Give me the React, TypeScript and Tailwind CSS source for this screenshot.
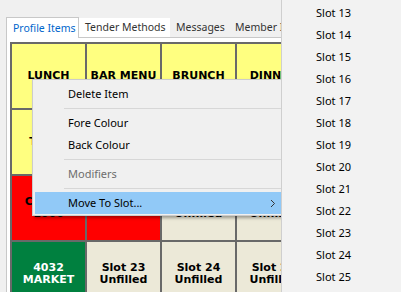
import React from "react";

type Cell = { lines: string[]; bg: string; fg?: string };

const rows: Cell[][] = [
  [
    { lines: ["LUNCH"], bg: "bg-[#ffff80]" },
    { lines: ["BAR MENU"], bg: "bg-[#ffff80]" },
    { lines: ["BRUNCH"], bg: "bg-[#ffff80]" },
    { lines: ["DINNER"], bg: "bg-[#ffff80]" },
  ],
  [
    { lines: ["TAPAS"], bg: "bg-[#ffff80]" },
    { lines: ["DRINKS"], bg: "bg-[#ffff80]" },
    { lines: ["DESSERT"], bg: "bg-[#ffff80]" },
    { lines: ["KIDS"], bg: "bg-[#ffff80]" },
  ],
  [
    { lines: ["COFFEE", "1000"], bg: "bg-[#ff0000]" },
    { lines: ["WINE"], bg: "bg-[#ff0000]" },
    { lines: ["Slot 19", "Unfilled"], bg: "bg-[#ece9d8]" },
    { lines: ["Slot 20", "Unfilled"], bg: "bg-[#ece9d8]" },
  ],
  [
    { lines: ["4032", "MARKET"], bg: "bg-[#00803f]", fg: "text-white" },
    { lines: ["Slot 23", "Unfilled"], bg: "bg-[#ece9d8]" },
    { lines: ["Slot 24", "Unfilled"], bg: "bg-[#ece9d8]" },
    { lines: ["Slot 25", "Unfilled"], bg: "bg-[#ece9d8]" },
  ],
];

const slots = [13, 14, 15, 16, 17, 18, 19, 20, 21, 22, 23, 24, 25];

function Sep() {
  return (
    <div className="h-[7px] flex items-center pl-[29px]">
      <div className="h-px w-full bg-[#d7d7d7]" />
    </div>
  );
}

function Item({ label, disabled }: { label: string; disabled?: boolean }) {
  return (
    <div
      className={`h-[22px] flex items-center pl-[33px] pr-[8px] ${disabled ? "text-[#6d6d6d]" : "text-black"}`}
    >
      <span className="flex-1">{label}</span>
    </div>
  );
}

export default function App() {
  return (
    <div
      className="relative w-[401px] h-[292px] overflow-hidden bg-[#f0f0f0]"
      style={{ fontFamily: '"Noto Sans", sans-serif' }}
    >
      {/* main window */}
      <div className="w-[281px] h-full overflow-hidden flex flex-col pt-[17px] pl-[6px]">
        {/* tabs */}
        <div className="flex h-[20px] text-[10.5px] leading-none relative z-10 items-end whitespace-nowrap">
          <div className="w-[73px] shrink-0 h-[21px] bg-white border border-b-0 border-[#c8c8c8] pl-[6px] flex items-center text-[#0066cc] -mb-px">
            Profile Items
          </div>
          <div className="w-[91px] shrink-0 h-[19px] bg-white pl-[6px] flex items-center text-[#333]">
            Tender Methods
          </div>
          <div className="w-[60px] shrink-0 h-[19px] pl-[6px] flex items-center text-[#333]">
            Messages
          </div>
          <div className="w-[60px] shrink-0 h-[19px] pl-[5px] flex items-center text-[#333]">
            Member Info
          </div>
        </div>
        {/* panel */}
        <div className="flex-1 bg-white border-l border-t border-[#c8c8c8] pt-[4px] pl-[3px]">
          <div
            className="grid grid-cols-[repeat(4,73px)] auto-rows-[64px] gap-[2px] p-[2px] bg-[#696969] w-max"
            style={{ fontFamily: '"DejaVu Sans", sans-serif' }}
          >
            {rows.flat().map((c, i) => (
              <div
                key={i}
                className={`${c.bg} ${c.fg ?? "text-black"} flex flex-col items-center justify-center text-[11px] font-bold leading-[12px] whitespace-nowrap`}
              >
                {c.lines.map((l, j) => (
                  <div key={j}>{l}</div>
                ))}
              </div>
            ))}
          </div>
        </div>
      </div>

      {/* context menu */}
      <div className="absolute left-[32px] top-[79px] w-[300px] h-[137px] bg-[#f0f0f0] border border-[#cccccc] pt-[3px] pl-[2px] text-[11px] shadow-[2px_2px_3px_rgba(0,0,0,0.35)]">
        <Item label="Delete Item" />
        <Sep />
        <Item label="Fore Colour" />
        <Item label="Back Colour" />
        <Sep />
        <Item label="Modifiers" disabled />
        <Sep />
        <div className="w-[247px]">
          <div className="h-[22px] flex items-center pl-[33px] pr-[6px] bg-[#91c9f7] text-black">
            <span className="flex-1">Move To Slot...</span>
            <svg width="6" height="9" viewBox="0 0 6 9">
              <path d="M1 1 L4.5 4.5 L1 8" fill="none" stroke="#333" strokeWidth="1" />
            </svg>
          </div>
        </div>
      </div>

      {/* submenu */}
      <div className="absolute left-[281px] top-0 w-[120px] h-full bg-[#f2f2f2] border-l border-[#cfcfcf] pt-[2px] text-[11px] text-black">
        {slots.map((s) => (
          <div key={s} className="h-[22px] flex items-center pl-[34px]">
            Slot {s}
          </div>
        ))}
      </div>
    </div>
  );
}
